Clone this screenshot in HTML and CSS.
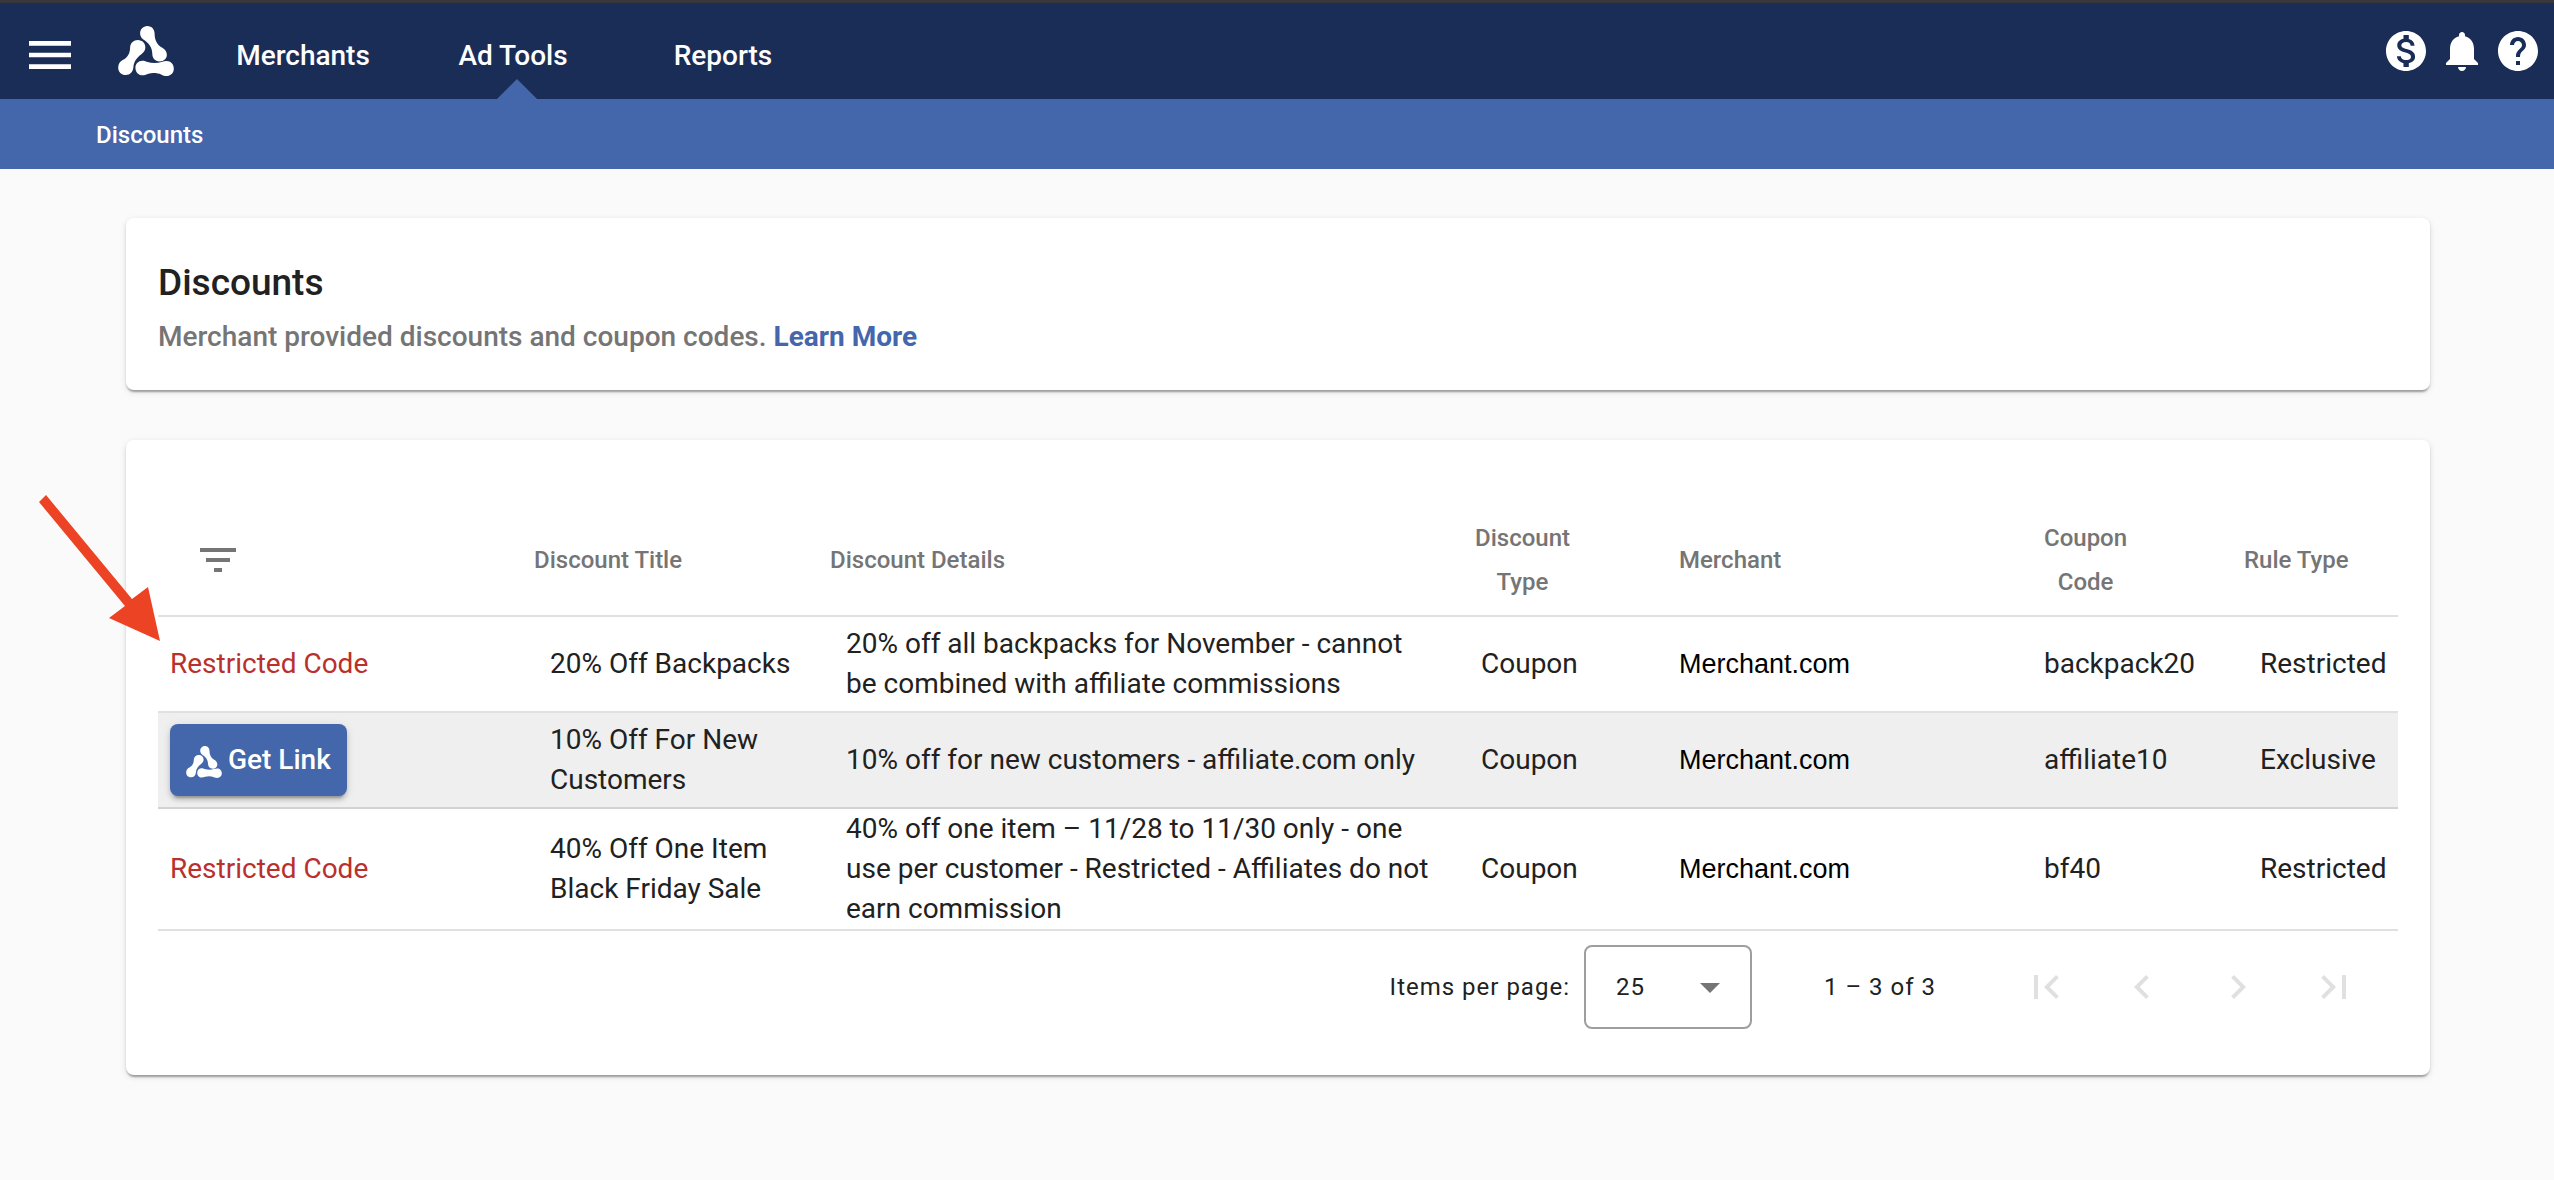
FILE: index.html
```html
<!DOCTYPE html>
<html lang="en">
<head>
    <meta charset="UTF-8">
    <meta name="viewport" content="width=device-width, initial-scale=1.0">
    <title>Discounts</title>
    <link rel="stylesheet" href="styles.css">
</head>
<body>
    <!-- shared logo -->
    <svg class="defs" aria-hidden="true">
        <symbol id="logo" viewBox="54 47 168 151">
            <path d="M121 75C117 58 130 47 142 47C156 47 164 58 164 70C164 90 172 105 186 112C196 117 201 126 201 134C201 146 192 154 179 154C165 154 157 144 157 131C157 112 146 98 130 88C125 84 122 79 121 75Z"/>
            <path d="M90 111C91 98 101 89 113 89C127 89 137 100 136 112C136 120 131 127 124 132C110 142 101 155 100 171C99 186 90 195 77 195C63 195 54 185 54 172C54 162 60 153 69 149C82 142 90 130 90 111Z"/>
            <path d="M106 173C106 161 115 152 127 152C132 152 137 154 140 155C155 160 172 160 185 156C190 154 195 153 200 153C213 153 222 163 222 176C222 189 212 198 200 198C194 198 189 196 185 194C171 188 156 188 143 192C138 194 133 196 127 196C115 196 106 186 106 173Z"/>
        </symbol>
    </svg>

    <header class="topbar">
        <button class="icon-btn menu-btn" aria-label="Menu">
            <svg viewBox="0 0 24 24"><path d="M3 18h18v-2H3v2zm0-5h18v-2H3v2zm0-7v2h18V6H3z"/></svg>
        </button>
        <a class="brand" href="#" aria-label="Home"><svg><use href="#logo"/></svg></a>
        <nav class="tabs">
            <a href="#">Merchants</a>
            <a href="#" class="active">Ad Tools</a>
            <a href="#">Reports</a>
        </nav>
        <div class="actions">
            <button class="icon-btn" aria-label="Payments">
                <svg viewBox="0 0 24 24"><path d="M12 2C6.48 2 2 6.48 2 12s4.48 10 10 10 10-4.48 10-10S17.52 2 12 2zm1.41 16.09V20h-2.67v-1.93c-1.71-.36-3.16-1.46-3.27-3.4h1.96c.1 1.05.82 1.87 2.65 1.87 1.96 0 2.4-.98 2.4-1.59 0-.83-.44-1.61-2.67-2.14-2.48-.6-4.18-1.62-4.18-3.67 0-1.72 1.39-2.84 3.11-3.21V4h2.67v1.95c1.86.45 2.79 1.86 2.85 3.39H14.3c-.05-1.11-.64-1.87-2.22-1.87-1.5 0-2.4.68-2.4 1.64 0 .84.65 1.39 2.67 1.91s4.18 1.39 4.18 3.91c-.01 1.83-1.38 2.83-3.12 3.16z"/></svg>
            </button>
            <button class="icon-btn" aria-label="Notifications">
                <svg viewBox="0 0 24 24"><path d="M12 22c1.100 0 2-.9 2-2h-4c0 1.100.89 2 2 2zm6-6v-5c0-3.070-1.640-5.640-4.500-6.320V4c0-.83-.67-1.500-1.500-1.500s-1.500.67-1.500 1.500v.68C7.630 5.360 6 7.920 6 11v5l-2 2v1h16v-1l-2-2z"/></svg>
            </button>
            <button class="icon-btn" aria-label="Help">
                <svg viewBox="0 0 24 24"><path d="M12 2C6.480 2 2 6.480 2 12s4.480 10 10 10 10-4.480 10-10S17.520 2 12 2zm1 17h-2v-2h2v2zm2.070-7.750l-.9.920C13.450 12.900 13 13.500 13 15h-2v-.5c0-1.100.45-2.100 1.170-2.830l1.240-1.260c.37-.36.590-.86.590-1.410 0-1.100-.9-2-2-2s-2 .9-2 2H8c0-2.210 1.790-4 4-4s4 1.790 4 4c0 .88-.36 1.680-.93 2.250z"/></svg>
            </button>
        </div>
    </header>
    <nav class="subbar">
        <a href="#">Discounts</a>
    </nav>

    <main>
        <section class="card intro">
            <h1>Discounts</h1>
            <p>Merchant provided discounts and coupon codes. <a href="#">Learn More</a></p>
        </section>

        <section class="card list">
            <table>
                <colgroup>
                    <col class="col-action">
                    <col class="col-title">
                    <col>
                    <col class="col-type">
                    <col class="col-merchant">
                    <col class="col-code">
                    <col class="col-rule">
                </colgroup>
                <thead>
                    <tr>
                        <th>
                            <button class="icon-btn filter-btn" aria-label="Filter">
                                <svg viewBox="0 0 24 24"><path d="M10 18h4v-2h-4v2zM3 6v2h18V6H3zm3 7h12v-2H6v2z"/></svg>
                            </button>
                        </th>
                        <th><button class="sort">Discount Title</button></th>
                        <th><button class="sort">Discount Details</button></th>
                        <th class="indent"><button class="sort">Discount<br>Type</button></th>
                        <th class="indent-lg"><button class="sort">Merchant</button></th>
                        <th class="indent-lg"><button class="sort">Coupon<br>Code</button></th>
                        <th><button class="sort">Rule Type</button></th>
                    </tr>
                </thead>
                <tbody>
                    <tr>
                        <td class="restricted">Restricted Code</td>
                        <td>20% Off Backpacks</td>
                        <td class="details">20% off all backpacks for November - cannot be combined with affiliate commissions</td>
                        <td>Coupon</td>
                        <td class="merchant">Merchant.com</td>
                        <td>backpack20</td>
                        <td>Restricted</td>
                    </tr>
                    <tr>
                        <td><button class="link-btn"><svg><use href="#logo"/></svg>Get Link</button></td>
                        <td>10% Off For New Customers</td>
                        <td class="details">10% off for new customers - affiliate.com only</td>
                        <td>Coupon</td>
                        <td class="merchant">Merchant.com</td>
                        <td>affiliate10</td>
                        <td>Exclusive</td>
                    </tr>
                    <tr>
                        <td class="restricted">Restricted Code</td>
                        <td>40% Off One Item Black Friday Sale</td>
                        <td class="details">40% off one item – 11/28 to 11/30 only - one use per customer - Restricted - Affiliates do not earn commission</td>
                        <td>Coupon</td>
                        <td class="merchant">Merchant.com</td>
                        <td>bf40</td>
                        <td>Restricted</td>
                    </tr>
                </tbody>
            </table>

            <div class="paginator">
                <label for="page-size">Items per page:</label>
                <div class="select">
                    <select id="page-size">
                        <option>10</option>
                        <option selected>25</option>
                        <option>50</option>
                    </select>
                    <svg viewBox="0 0 20 10"><path d="M0 0h20L10 10z"/></svg>
                </div>
                <span class="range">1 – 3 of 3</span>
                <button class="icon-btn" disabled aria-label="First page">
                    <svg viewBox="0 0 24 24"><path d="M18.410 16.590L13.820 12l4.590-4.590L17 6l-6 6 6 6zM6 6h2v12H6z"/></svg>
                </button>
                <button class="icon-btn" disabled aria-label="Previous page">
                    <svg viewBox="0 0 24 24"><path d="M15.410 7.410L14 6l-6 6 6 6 1.410-1.410L10.830 12z"/></svg>
                </button>
                <button class="icon-btn" disabled aria-label="Next page">
                    <svg viewBox="0 0 24 24"><path d="M10 6L8.590 7.410 13.170 12l-4.580 4.590L10 18l6-6z"/></svg>
                </button>
                <button class="icon-btn" disabled aria-label="Last page">
                    <svg viewBox="0 0 24 24"><path d="M5.590 7.410L10.180 12l-4.590 4.590L7 18l6-6-6-6zM16 6h2v12h-2z"/></svg>
                </button>
            </div>

            <svg class="pointer" viewBox="0 0 124 148" aria-hidden="true"><path d="M1 8L8 1l86 104 16-12 12 54-51-23 16-12z"/></svg>
        </section>
    </main>
</body>
</html>
```
FILE: styles.css
```css
:root {
    --navy: #1a2d57;
    --blue: #4466ab;
    --text: #212121;
    --muted: #757575;
    --red: #b9302c;
    --line: rgba(0, 0, 0, 0.12);
}
* {
    box-sizing: border-box;
}
body {
    margin: 0;
    background-color: #fafafa;
    color: var(--text);
    font-family: Roboto, 'Helvetica Neue', sans-serif;
    font-size: 28px;
    line-height: 40px;
}
a {
    color: inherit;
    text-decoration: none;
}
button {
    padding: 0;
    border: none;
    background: none;
    color: inherit;
    font: inherit;
    cursor: pointer;
}
svg {
    display: block;
    fill: currentColor;
}
.defs {
    position: absolute;
    width: 0;
    height: 0;
}
.icon-btn svg {
    width: 48px;
    height: 48px;
}

/* header */
.topbar {
    display: flex;
    height: 99px;
    padding: 0 12px 0 22px;
    border-top: 3px solid #38373d;
    background-color: var(--navy);
    color: #fff;
    font-weight: 500;
}
.menu-btn svg {
    width: 56px;
    height: 56px;
}
.menu-btn {
    padding-top: 8px;
}
.brand {
    margin: 23px 24px 0 40px;
}
.brand svg {
    width: 56px;
    height: 50px;
}
.tabs {
    display: flex;
    flex: 1;
}
.tabs a {
    position: relative;
    width: 210px;
    line-height: 106px;
    text-align: center;
}
.tabs .active::after {
    content: '';
    position: absolute;
    top: 76px;
    left: calc(50% - 16px);
    border: 20px solid transparent;
    border-top: none;
    border-bottom-color: var(--blue);
}
.actions {
    display: flex;
    gap: 8px;
}
.subbar {
    height: 70px;
    padding: 0 96px;
    background-color: var(--blue);
    color: #fff;
    font-size: 24px;
    font-weight: 500;
    line-height: 72px;
}

/* cards */
main {
    display: flex;
    flex-direction: column;
    gap: 50px;
    padding: 49px 124px 49px 126px;
}
.card {
    position: relative;
    padding: 32px;
    border-radius: 8px;
    background-color: #fff;
    box-shadow: 0 4px 2px -2px rgba(0, 0, 0, 0.2), 0 2px 2px rgba(0, 0, 0, 0.14), 0 2px 6px rgba(0, 0, 0, 0.12);
}
.intro h1 {
    margin: 0;
    font-size: 37px;
    font-weight: 500;
    line-height: 66px;
}
.intro p {
    margin: 0;
    color: var(--muted);
    font-weight: 500;
    line-height: 42px;
}
.intro a {
    color: var(--blue);
    font-weight: 700;
}
.list {
    padding-top: 64px;
}

/* table */
table {
    width: 100%;
    table-layout: fixed;
    border-spacing: 0;
}
.col-action { width: 376px; }
.col-title { width: 296px; }
.col-type { width: 198px; }
.col-merchant { width: 365px; }
.col-code { width: 216px; }
.col-rule { width: 154px; }
th, td {
    border-bottom: 2px solid var(--line);
    text-align: left;
}
th {
    height: 113px;
    padding: 0;
    color: var(--muted);
    font-size: 24px;
    font-weight: 500;
    line-height: 44px;
}
.indent {
    padding-left: 10px;
}
.indent-lg {
    padding-left: 16px;
}
td {
    height: 96px;
    padding: 0 16px;
}
td:first-child {
    padding: 0 12px;
}
td:last-child {
    padding-right: 0;
}
.details {
    padding-right: 32px;
}
tbody tr:nth-child(even) {
    background-color: #efefef;
}
.filter-btn {
    display: block;
    margin-left: 36px;
}
.restricted {
    color: var(--red);
}
.merchant {
    color: #000;
    font-family: 'Liberation Sans', Arial, sans-serif;
    font-size: 27px;
}
.link-btn {
    display: flex;
    align-items: center;
    gap: 6px;
    height: 72px;
    padding: 0 16px;
    border-radius: 8px;
    background-color: var(--blue);
    box-shadow: 0 6px 2px -4px rgba(0, 0, 0, 0.2), 0 4px 4px rgba(0, 0, 0, 0.14), 0 2px 10px rgba(0, 0, 0, 0.12);
    color: #fff;
    font-weight: 500;
}
.link-btn svg {
    width: 36px;
    height: 32px;
    margin-top: 4px;
}

/* paginator */
.paginator {
    display: flex;
    align-items: center;
    justify-content: flex-end;
    height: 112px;
    padding-right: 16px;
    font-size: 24px;
    letter-spacing: 1px;
}
.select {
    position: relative;
    margin: 0 72px 0 14px;
}
.select select {
    width: 168px;
    height: 84px;
    padding: 0 30px;
    border: 2px solid #9e9e9e;
    border-radius: 8px;
    background-color: #fff;
    color: inherit;
    font: inherit;
    letter-spacing: inherit;
    appearance: none;
}
.select svg {
    position: absolute;
    top: 38px;
    right: 32px;
    width: 20px;
    height: 10px;
    fill: var(--muted);
    pointer-events: none;
}
.range {
    margin-right: 62px;
}
.paginator .icon-btn {
    padding: 24px;
    color: #e0e0e0;
}

/* arrow over the first row */
.pointer {
    position: absolute;
    top: 54px;
    left: -88px;
    width: 124px;
    height: 148px;
    fill: #ec4325;
}
```
